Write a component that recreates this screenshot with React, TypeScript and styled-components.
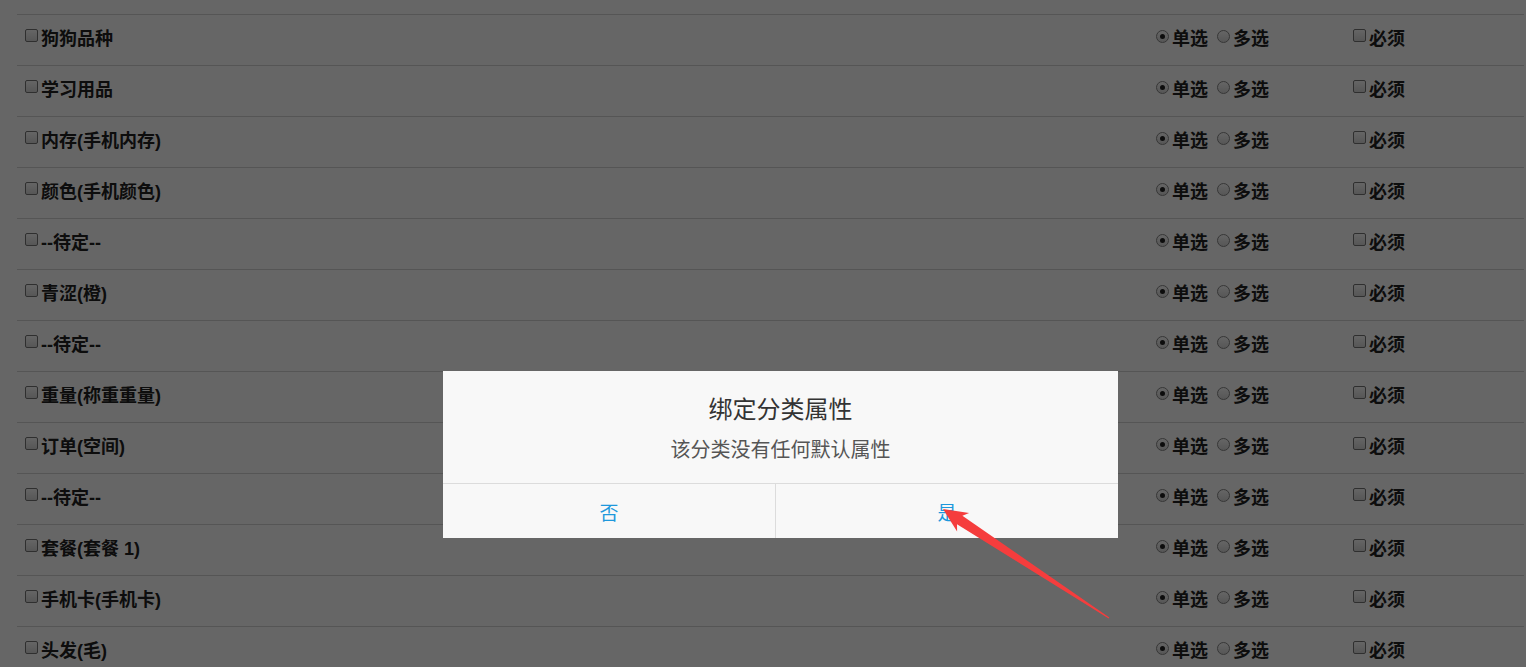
import styled, { createGlobalStyle } from 'styled-components'

const GlobalStyle = createGlobalStyle`
  html, body {
    margin: 0;
    padding: 0;
    background: #fff;
    overflow: hidden;
    font-family: 'Liberation Sans', 'Noto Sans CJK SC', sans-serif;
  }
`

const attrs = [
  '品牌',
  '狗狗品种',
  '学习用品',
  '内存(手机内存)',
  '颜色(手机颜色)',
  '--待定--',
  '青涩(橙)',
  '--待定--',
  '重量(称重重量)',
  '订单(空间)',
  '--待定--',
  '套餐(套餐 1)',
  '手机卡(手机卡)',
  '头发(毛)',
]

export default function App() {
  return (
    <>
      <GlobalStyle />
      <Page>
        <Table>
          {attrs.map((name, i) => (
            <Row key={i}>
              <NameCell>
                <Check />
                <Label>{name}</Label>
              </NameCell>
              <OptionCell>
                <Radio checked />
                <Label>单选</Label>
                <Radio />
                <Label>多选</Label>
              </OptionCell>
              <OptionCell>
                <Check />
                <Label>必须</Label>
              </OptionCell>
            </Row>
          ))}
        </Table>
      </Page>

      <Mask />

      <Dialog>
        <DialogBody>
          <Title>绑定分类属性</Title>
          <Message>该分类没有任何默认属性</Message>
        </DialogBody>
        <Buttons>
          <ActionButton>否</ActionButton>
          <ActionButton>是</ActionButton>
        </Buttons>
      </Dialog>

      <Arrow viewBox='0 0 1526 667'>
        {/* 截图标注的红色箭头 */}
        <polygon
          points='943,509 969.1,513 962.4,515.8 1109.3,617.6 1108.7,618.4 957,524.2 957.1,531.4'
          fill='#f53d3d'
        />
      </Arrow>
    </>
  )
}

const Page = styled.div`
  padding: 0 2px 0 17px;
`

const Table = styled.div`
  margin-top: -36px;
`

const Row = styled.div`
  display: grid;
  grid-template-columns: 1136px 197px 1fr;
  align-items: center;
  height: 50px;
  border-bottom: 1px solid #d4d4d4;
`

const NameCell = styled.div`
  display: flex;
  align-items: center;
  padding: 0 0 2px 8px;
`

const OptionCell = styled.div`
  display: flex;
  align-items: center;
  padding: 0 0 2px 3px;
`

const Label = styled.span`
  font-size: 18px;
  line-height: 24px;
  font-weight: bold;
  color: #222;
  margin: 0 9px 0 3px;
  white-space: nowrap;
`

const Check = styled.span`
  width: 11px;
  height: 11px;
  margin-bottom: 8px;
  border: 1px solid #777;
  border-radius: 2px;
  background: linear-gradient(#fdfdfd, #d8d8d8);
  flex: none;
`

const Radio = styled.span<{ checked?: boolean }>`
  position: relative;
  width: 11px;
  height: 11px;
  margin-bottom: 5px;
  border: 1px solid #888;
  border-radius: 50%;
  background: linear-gradient(#fdfdfd, #d8d8d8);
  flex: none;

  &::after {
    content: '';
    display: ${(p) => (p.checked ? 'block' : 'none')};
    position: absolute;
    left: 3px;
    top: 3px;
    width: 5px;
    height: 5px;
    border-radius: 50%;
    background: #222;
  }
`

const Mask = styled.div`
  position: fixed;
  inset: 0;
  background: rgba(0, 0, 0, 0.6);
`

const Dialog = styled.div`
  position: fixed;
  left: 443px;
  top: 371px;
  width: 675px;
  background: #f8f8f8;
  font-family: 'Noto Sans CJK SC', 'Liberation Sans', sans-serif;
`

const DialogBody = styled.div`
  display: flex;
  flex-direction: column;
  align-items: center;
  gap: 14px;
  padding: 23px 0 21px;
  border-bottom: 1px solid #dcdcdc;
`

const Title = styled.div`
  font-size: 24px;
  line-height: 28px;
  color: #333;
`

const Message = styled.div`
  font-size: 20px;
  line-height: 26px;
  color: #555;
`

const Buttons = styled.div`
  display: grid;
  grid-template-columns: 332px 1fr;
  height: 54px;
`

const ActionButton = styled.div`
  display: flex;
  align-items: center;
  justify-content: center;
  font-size: 19px;
  color: #1e98dc;
  & + & {
    border-left: 1px solid #dcdcdc;
  }
`

const Arrow = styled.svg`
  position: fixed;
  inset: 0;
  width: 1526px;
  height: 667px;
  pointer-events: none;
`
